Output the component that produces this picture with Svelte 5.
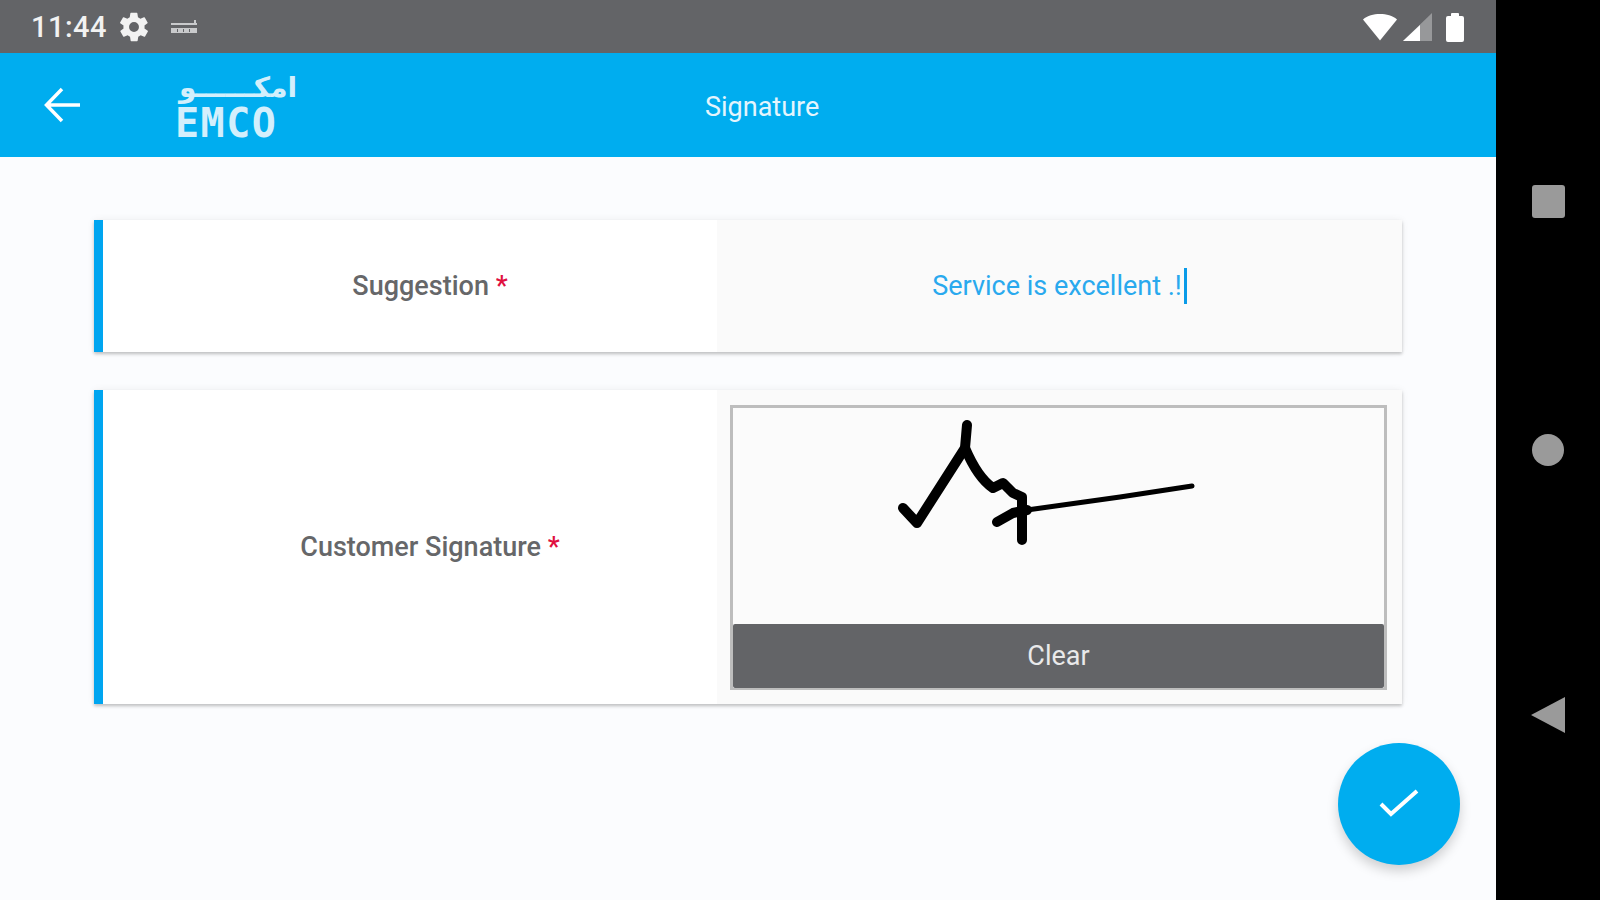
<script>
	let suggestion = 'Service is excellent .!';
</script>

<div class="device">
	<div class="screen">
		<header class="status">
			<span class="time">11:44</span>
			<svg class="gear" viewBox="0 0 24 24" width="34" height="34" aria-hidden="true">
				<path fill="#f2f2f2" d="M19.4 13a7.5 7.5 0 0 0 0-2l2.1-1.6a.5.5 0 0 0 .1-.6l-2-3.5a.5.5 0 0 0-.6-.2l-2.5 1a7.3 7.3 0 0 0-1.7-1l-.4-2.6a.5.5 0 0 0-.5-.5h-4a.5.5 0 0 0-.5.4l-.4 2.7a7.7 7.7 0 0 0-1.7 1l-2.5-1a.5.5 0 0 0-.6.2l-2 3.5a.5.5 0 0 0 .1.6L4.6 11a7.5 7.5 0 0 0 0 2l-2.1 1.6a.5.5 0 0 0-.1.6l2 3.5c.1.2.4.3.6.2l2.5-1c.5.4 1.1.7 1.7 1l.4 2.6c0 .3.2.5.5.5h4c.3 0 .5-.2.5-.4l.4-2.7c.6-.3 1.2-.6 1.7-1l2.5 1c.2.1.5 0 .6-.2l2-3.5a.5.5 0 0 0-.1-.6zM12 15.5a3.5 3.5 0 1 1 0-7 3.5 3.5 0 0 1 0 7z" />
			</svg>
			<svg class="mini-logo" viewBox="0 0 26 14" width="26" height="14" aria-hidden="true">
				<g fill="#c9cacc">
					<rect x="0" y="3" width="26" height="2" />
					<rect x="23" y="0" width="2" height="5" />
					<rect x="0" y="8" width="26" height="5" />
				</g>
				<g fill="#636467">
					<rect x="6" y="9" width="1" height="3" />
					<rect x="12" y="9" width="1" height="3" />
					<rect x="18" y="9" width="1" height="3" />
				</g>
			</svg>
			<span class="spacer"></span>
			<svg class="wifi" viewBox="0 0 34 28" width="34" height="28" aria-hidden="true">
				<path fill="#fff" d="M0 6.5C4.5 2.5 10.5 1 17 1s12.500 1.500 17 5.500L17 27.500z" />
			</svg>
			<svg class="signal" viewBox="0 0 29 28" width="29" height="28" aria-hidden="true">
				<path fill="#97989a" d="M29 0v28H0z" />
				<path fill="#fff" d="M17 12v16H0z" />
			</svg>
			<svg class="battery" viewBox="0 0 18 30" width="18" height="30" aria-hidden="true">
				<path fill="#fff" d="M5 2a1 1 0 0 1 1-1h6a1 1 0 0 1 1 1v2h3a2 2 0 0 1 2 2v22a2 2 0 0 1-2 2H2a2 2 0 0 1-2-2V6a2 2 0 0 1 2-2h3z" />
			</svg>
		</header>

		<nav class="appbar">
			<button class="back" type="button" aria-label="Back">
				<svg viewBox="0 0 38 36" width="38" height="36" aria-hidden="true">
					<path d="M36 18H3M18 2 2.500 18 18 34" fill="none" stroke="#fff" stroke-width="3.500" />
				</svg>
			</button>
			<div class="logo">
				<span class="logo__ar" dir="rtl" lang="ar">امكــــــو</span>
				<span class="logo__en">EMCO</span>
			</div>
			<h1 class="title">Signature</h1>
		</nav>

		<main class="content">
			<section class="card card--short">
				<div class="label">Suggestion <em>*</em></div>
				<div class="value">
					<span class="typed">{suggestion}</span><span class="caret"></span>
				</div>
			</section>

			<section class="card card--tall">
				<div class="label">Customer Signature <em>*</em></div>
				<div class="value value--pad">
					<div class="sigbox">
						<svg class="sigdraw" viewBox="0 0 651 216" aria-label="Signature drawing">
							<g fill="none" stroke="#000" stroke-linecap="round" stroke-linejoin="round">
								<path stroke-width="10" d="M170 100 184 115 232 40 234 17" />
								<path stroke-width="10" d="M232 40C238 54 248 72 260 80L270 75 280 85 289 89V132" />
								<path stroke-width="10" d="M264 114 280 105 294 102" />
								<path stroke-width="5" d="M294 102 387 89 459 78" />
							</g>
						</svg>
						<button class="clear" type="button">Clear</button>
					</div>
				</div>
			</section>
		</main>

		<button class="fab" type="button" aria-label="Submit">
			<svg viewBox="0 0 44 34" width="44" height="34" aria-hidden="true">
				<path d="M4 17 14 27 40 4" fill="none" stroke="#fff" stroke-width="4" />
			</svg>
		</button>
	</div>

	<aside class="softkeys">
		<span class="key-square"></span>
		<span class="key-circle"></span>
		<svg viewBox="0 0 34 36" width="34" height="36" aria-hidden="true">
			<path fill="#9a9a9a" d="M34 0v36L0 18z" />
		</svg>
	</aside>
</div>

<style>
	:global(body) {
		margin: 0;
		background: #000;
	}

	.device {
		display: flex;
		width: 1600px;
		height: 900px;
		overflow: hidden;
		font-family: Roboto, 'Liberation Sans', sans-serif;
	}

	.screen {
		position: relative;
		display: flex;
		flex-direction: column;
		width: 1496px;
		background: #fbfcfe;
	}

	.status {
		display: flex;
		align-items: center;
		flex: 0 0 53px;
		box-sizing: border-box;
		padding: 0 32px 0 31px;
		background: #636467;
		color: #f2f2f2;
	}

	.time {
		width: 86px;
		font-size: 29px;
		font-weight: 500;
		letter-spacing: 0.5px;
	}

	.gear {
		margin-right: 20px;
	}

	.spacer {
		flex: 1;
	}

	.signal {
		margin: 0 14px 0 6px;
	}

	.battery {
		margin-bottom: 0;
	}

	.appbar {
		display: flex;
		align-items: center;
		flex: 0 0 104px;
		background: #00adef;
		color: #fff;
	}

	.back {
		display: flex;
		margin-left: 44px;
		padding: 0;
		border: 0;
		background: none;
	}

	.logo {
		display: flex;
		flex-direction: column;
		align-items: stretch;
		width: 126px;
		margin-left: 93px;
		color: #d3effc;
	}

	.logo__ar {
		height: 36px;
		font-family: 'DejaVu Sans', sans-serif;
		font-size: 28px;
		font-weight: 700;
		line-height: 36px;
		text-align: center;
		white-space: nowrap;
	}

	.logo__en {
		font-family: 'DejaVu Sans Mono', monospace;
		font-size: 40px;
		font-weight: 700;
		line-height: 34px;
		letter-spacing: 1.500px;
		white-space: nowrap;
	}

	.title {
		margin: 4px 0 0 404px;
		font-size: 27px;
		font-weight: 400;
		color: #e4f5fd;
	}

	.content {
		display: flex;
		flex-direction: column;
		gap: 38px;
		padding: 63px 94px 0;
	}

	.card {
		display: grid;
		grid-template-columns: 614px 1fr;
		box-sizing: border-box;
		border-left: 9px solid #00a5f0;
		background: #fff;
		box-shadow: 0 2px 3px rgba(0, 0, 0, 0.22), 0 0 8px rgba(0, 0, 0, 0.06);
	}

	.card--short {
		height: 132px;
	}

	.card--tall {
		height: 314px;
	}

	.label {
		align-self: center;
		padding-left: 40px;
		text-align: center;
		font-size: 27px;
		font-weight: 500;
		color: #666769;
	}

	.label em {
		font-style: normal;
		color: #e0103f;
	}

	.value {
		display: flex;
		align-items: center;
		justify-content: center;
		background: #fafafa;
		color: #29a9ee;
		font-size: 27px;
	}

	.value--pad {
		align-items: stretch;
		padding: 15px 15px 14px 13px;
	}

	.caret {
		width: 3px;
		height: 36px;
		margin-left: 2px;
		background: #0a9be8;
	}

	.sigbox {
		display: flex;
		flex-direction: column;
		flex: 1;
		box-sizing: border-box;
		border: 3px solid #bdbdbd;
		border-bottom-width: 2px;
		background: #fbfbfb;
	}

	.sigdraw {
		display: block;
		flex: 1;
		min-height: 0;
		width: 100%;
	}

	.clear {
		flex: 0 0 64px;
		padding: 0;
		border: 0;
		border-radius: 2px;
		background: #636467;
		color: #e9e9ea;
		font-family: inherit;
		font-size: 27px;
	}

	.fab {
		position: absolute;
		left: 1338px;
		top: 743px;
		display: flex;
		align-items: center;
		justify-content: center;
		width: 122px;
		height: 122px;
		padding: 0;
		border: 0;
		border-radius: 50%;
		background: #00adef;
		box-shadow: 0 6px 12px rgba(0, 0, 0, 0.18);
	}

	.softkeys {
		display: flex;
		flex-direction: column;
		align-items: center;
		flex: 1;
		box-sizing: border-box;
		padding: 185px 0 0 0;
		background: #000;
	}

	.key-square {
		width: 33px;
		height: 33px;
		border-radius: 3px;
		background: #9a9a9a;
	}

	.key-circle {
		width: 32px;
		height: 32px;
		margin: 216px 0 231px;
		border-radius: 50%;
		background: #9a9a9a;
	}
</style>
